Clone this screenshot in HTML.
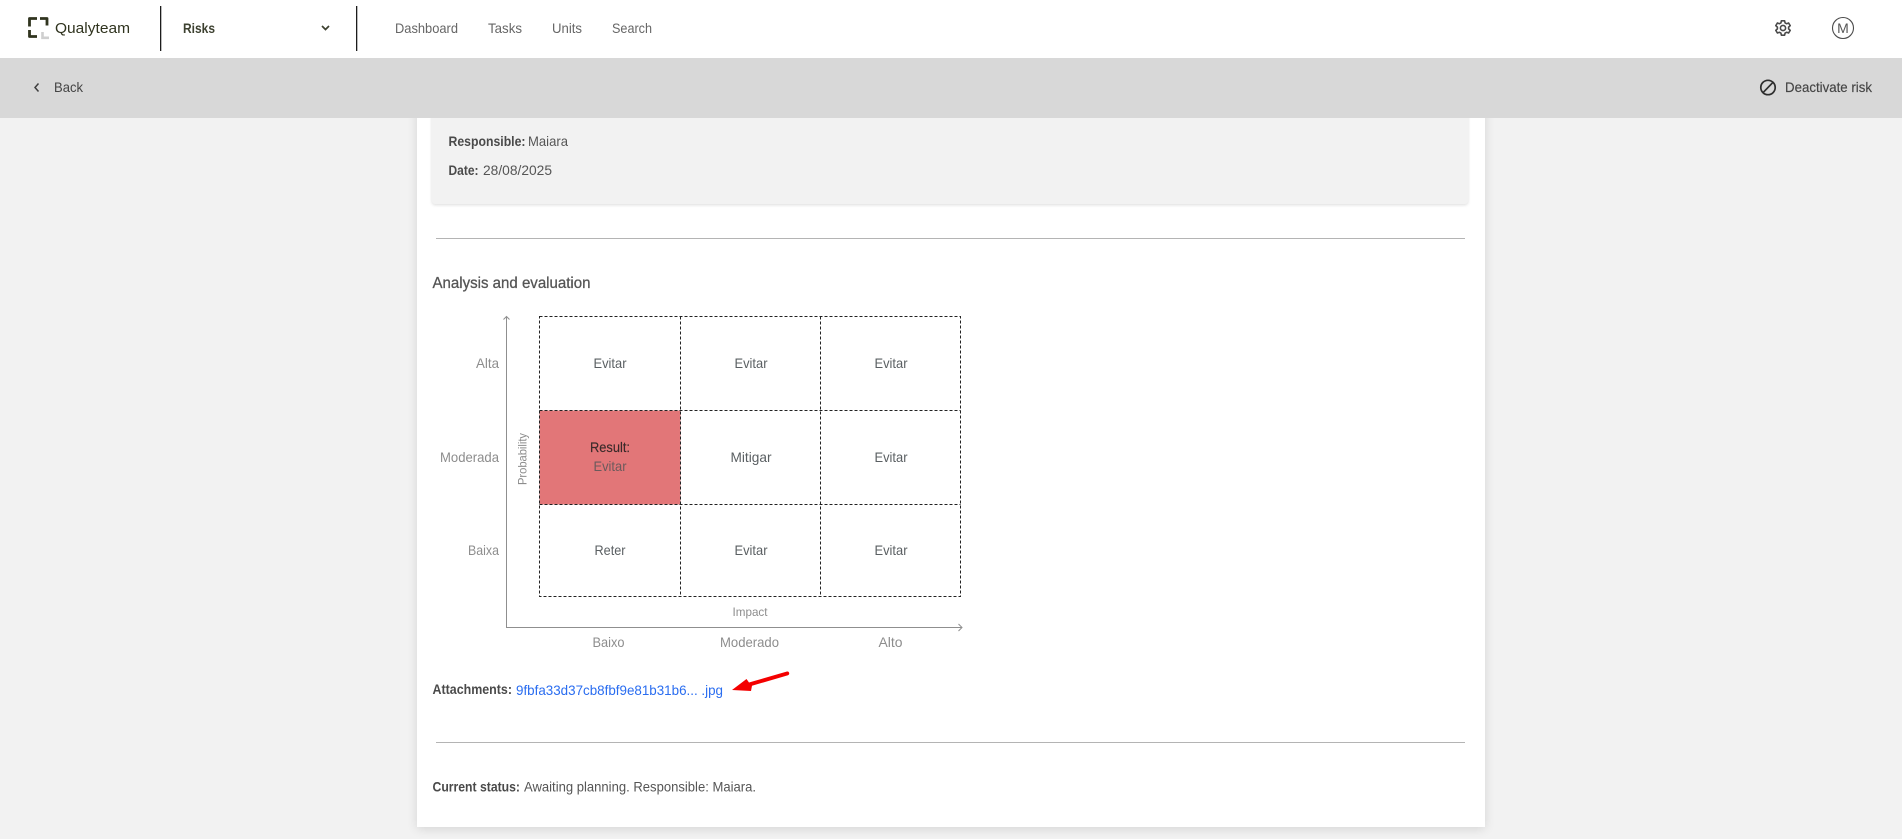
<!DOCTYPE html>
<html lang="en">
<head>
<meta charset="utf-8">
<title>Risk details</title>
<style>
html,body{margin:0;padding:0;width:1902px;height:839px;overflow:hidden;background:#f2f2f2}
.hdr{position:absolute;left:0;top:0;width:1902px;height:58px;background:#fff}
.sub{position:absolute;left:0;top:58px;width:1902px;height:60px;background:#d8d8d8;z-index:3}
.card{position:absolute;left:417px;top:90px;width:1068px;height:737px;background:#fff;box-shadow:0 2px 10px rgba(0,0,0,.12)}
.inner{position:absolute;left:432px;top:90px;width:1036px;height:114px;background:#f2f2f2;border-radius:3px;box-shadow:0 1px 3px rgba(0,0,0,.14)}
.rule{position:absolute;left:436px;width:1029px;height:1px;background:#b4b4b4}
svg{position:absolute;left:0;top:0;z-index:4}
text{font-family:"Liberation Sans",Arial,sans-serif;font-size:14px;fill:#555}
.b{font-weight:bold;fill:#4a4a4a}
.nav{fill:#666}
.lab{fill:#8d8d8d}
.cell{fill:#5a5f62}
.med{stroke-width:.15px}
</style>
</head>
<body>
<div class="hdr"></div>
<div class="card"></div>
<div class="inner"></div>
<div class="sub"></div>
<div class="rule" style="top:238px"></div>
<div class="rule" style="top:742px"></div>
<svg width="1902" height="839" viewBox="0 0 1902 839" xmlns="http://www.w3.org/2000/svg">
  <!-- logo -->
  <g fill="none" stroke="#30341f" stroke-width="2.8" stroke-linejoin="round">
    <path d="M29.5 26.5V18.5H37"/>
    <path d="M40 18.5H47V25.5"/>
    <path d="M29.5 30V36.5H37"/>
  </g>
  <path d="M42.5 32V37.8H49" fill="none" stroke="#cfcfcf" stroke-width="2.6"/>
  <text x="55" y="33" textLength="75" lengthAdjust="spacingAndGlyphs" style="font-size:15px;fill:#30341f">Qualyteam</text>

  <rect x="160" y="6" width="1.3" height="45" fill="#1c1c1c"/>
  <rect x="356" y="6" width="1.3" height="45" fill="#1c1c1c"/>
  <text x="183" y="33" textLength="32" lengthAdjust="spacingAndGlyphs" style="font-weight:bold;fill:#3d4130">Risks</text>
  <path d="M322 26L325.5 29.5L329 26" fill="none" stroke="#3d4130" stroke-width="1.7"/>

  <text class="nav" x="395" y="33" textLength="63" lengthAdjust="spacingAndGlyphs">Dashboard</text>
  <text class="nav" x="488" y="33" textLength="34" lengthAdjust="spacingAndGlyphs">Tasks</text>
  <text class="nav" x="552" y="33" textLength="30" lengthAdjust="spacingAndGlyphs">Units</text>
  <text class="nav" x="612" y="33" textLength="40" lengthAdjust="spacingAndGlyphs">Search</text>

  <!-- gear -->
  <g transform="translate(1783 28)" fill="none" stroke="#4a4a4a" stroke-width="1.6">
    <circle r="2.6"/>
    <path d="M-1.6-7.2H1.6L2.1-5.1 3.6-4.3 5.6-5 7.2-2.3 5.6-.9V.9L7.2 2.3 5.6 5 3.6 4.3 2.1 5.1 1.6 7.2H-1.6L-2.1 5.1-3.6 4.3-5.6 5-7.2 2.3-5.6.9V-.9L-7.2-2.3-5.6-5-3.6-4.3-2.1-5.1Z" stroke-linejoin="round"/>
  </g>
  <!-- avatar -->
  <circle cx="1843" cy="28" r="10.5" fill="none" stroke="#4a4a4a" stroke-width="1.1"/>
  <text x="1843" y="33" text-anchor="middle" style="font-size:14px;fill:#555">M</text>

  <!-- subheader -->
  <path d="M38.5 83.5L35 87.5L38.5 91.5" fill="none" stroke="#3f3f3f" stroke-width="1.5"/>
  <text x="54" y="92" textLength="29" lengthAdjust="spacingAndGlyphs" style="fill:#444">Back</text>
  <circle cx="1768" cy="87.5" r="7.2" fill="none" stroke="#2e2e2e" stroke-width="1.7"/>
  <path d="M1763 92.7L1773 82.3" stroke="#2e2e2e" stroke-width="1.7"/>
  <text x="1785" y="92" textLength="87" lengthAdjust="spacingAndGlyphs" class="med" stroke="#444" style="fill:#444">Deactivate risk</text>

  <!-- inner card text -->
  <text class="b" x="448.5" y="146" textLength="77" lengthAdjust="spacingAndGlyphs">Responsible:</text>
  <text x="528" y="146" textLength="40" lengthAdjust="spacingAndGlyphs">Maiara</text>
  <text class="b" x="448.5" y="175" textLength="30" lengthAdjust="spacingAndGlyphs">Date:</text>
  <text x="483" y="175" textLength="69" lengthAdjust="spacingAndGlyphs">28/08/2025</text>

  <text x="432.5" y="288" textLength="158" lengthAdjust="spacingAndGlyphs" stroke="#555" style="font-size:16px;fill:#555;stroke-width:.3px">Analysis and evaluation</text>

  <!-- matrix -->
  <rect x="539.5" y="410.5" width="141" height="94" fill="#e27678"/>
  <g fill="none" stroke="#222" stroke-width="1" stroke-dasharray="3 2">
    <path d="M539.5 316.5H960.5V596.5H539.5Z"/>
    <path d="M680.5 316.5V596.5"/>
    <path d="M820.5 316.5V596.5"/>
    <path d="M539.5 410.5H960.5"/>
    <path d="M539.5 504.5H960.5"/>
  </g>
  <!-- axes -->
  <g fill="none" stroke="#8f8f8f" stroke-width="1">
    <path d="M506.5 317V627.5H962"/>
    <path d="M503.5 319.5L506.5 316.5L509.5 319.5"/>
    <path d="M958.5 624L962 627.5L958.5 631"/>
  </g>

  <text class="lab" x="476" y="368" textLength="23" lengthAdjust="spacingAndGlyphs">Alta</text>
  <text class="lab" x="440" y="462" textLength="59" lengthAdjust="spacingAndGlyphs">Moderada</text>
  <text class="lab" x="468" y="555" textLength="31" lengthAdjust="spacingAndGlyphs">Baixa</text>
  <text class="lab" transform="translate(526.5 485) rotate(-90)" textLength="52" lengthAdjust="spacingAndGlyphs" style="font-size:12px">Probability</text>

  <text class="cell" x="593.5" y="368" textLength="33" lengthAdjust="spacingAndGlyphs">Evitar</text>
  <text class="cell" x="734.5" y="368" textLength="33" lengthAdjust="spacingAndGlyphs">Evitar</text>
  <text class="cell" x="874.5" y="368" textLength="33" lengthAdjust="spacingAndGlyphs">Evitar</text>

  <text x="590" y="452" textLength="40" lengthAdjust="spacingAndGlyphs" class="med" stroke="#3a2a2a" style="fill:#3a2a2a">Result:</text>
  <text x="593.5" y="471" textLength="33" lengthAdjust="spacingAndGlyphs" style="fill:#6b5a5c">Evitar</text>
  <text class="cell" x="730.5" y="462" textLength="41" lengthAdjust="spacingAndGlyphs">Mitigar</text>
  <text class="cell" x="874.5" y="462" textLength="33" lengthAdjust="spacingAndGlyphs">Evitar</text>

  <text class="cell" x="594.5" y="555" textLength="31" lengthAdjust="spacingAndGlyphs">Reter</text>
  <text class="cell" x="734.5" y="555" textLength="33" lengthAdjust="spacingAndGlyphs">Evitar</text>
  <text class="cell" x="874.5" y="555" textLength="33" lengthAdjust="spacingAndGlyphs">Evitar</text>

  <text class="lab" x="732.5" y="616" textLength="35" lengthAdjust="spacingAndGlyphs" style="font-size:12px">Impact</text>
  <text class="lab" x="592.5" y="647" textLength="32" lengthAdjust="spacingAndGlyphs">Baixo</text>
  <text class="lab" x="720" y="647" textLength="59" lengthAdjust="spacingAndGlyphs">Moderado</text>
  <text class="lab" x="878.5" y="647" textLength="24" lengthAdjust="spacingAndGlyphs">Alto</text>

  <!-- attachments -->
  <text class="b" x="432.5" y="694" textLength="79.5" lengthAdjust="spacingAndGlyphs">Attachments:</text>
  <text x="516" y="695" textLength="207" lengthAdjust="spacingAndGlyphs" style="fill:#2a6df0">9fbfa33d37cb8fbf9e81b31b6... .jpg</text>
  <path d="M732 690L746.5 679L749 682.5L787 671.5C789.5 671 790 674.5 788 675.2L752 685.8L751 691Z" fill="#f40000"/>

  <!-- status -->
  <text class="b" x="432.5" y="791.5" textLength="87.5" lengthAdjust="spacingAndGlyphs">Current status:</text>
  <text x="524" y="791.5" textLength="232" lengthAdjust="spacingAndGlyphs">Awaiting planning. Responsible: Maiara.</text>
</svg>
</body>
</html>
